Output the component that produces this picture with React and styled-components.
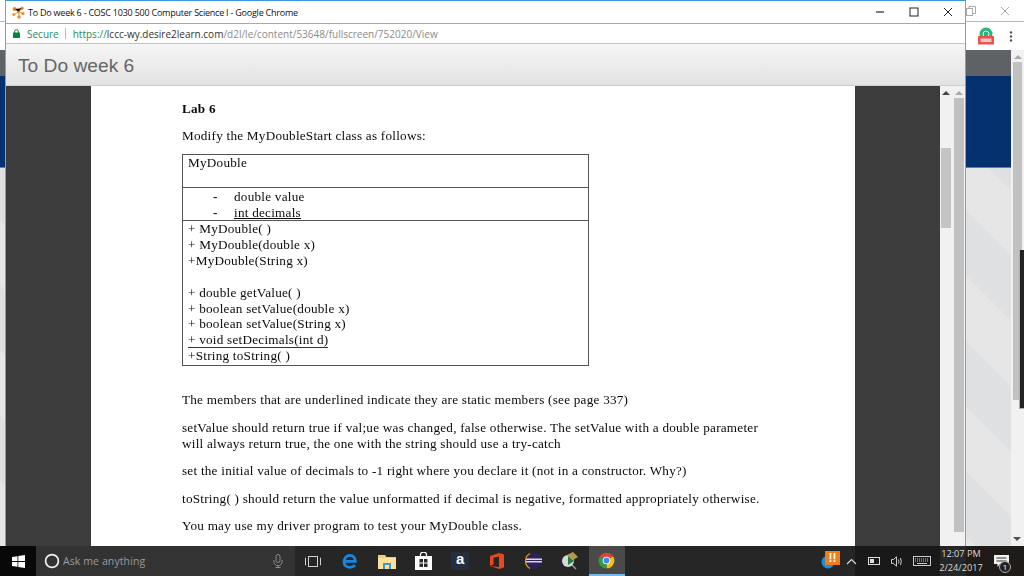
import React from "react";
import styled, { createGlobalStyle } from "styled-components";

const Global = createGlobalStyle`
  html, body { margin: 0; padding: 0; background: #222; overflow: hidden; }
  * { box-sizing: border-box; }
`;

const Desktop = styled.div`
  position: relative;
  width: 1024px;
  height: 576px;
  display: flex;
  flex-direction: column;
  overflow: hidden;
`;

/* ---------- browser window behind ---------- */
const BackBrowser = styled.div`
  height: 546px;
  display: flex;
  flex-direction: column;
`;
const BackTitle = styled.div`
  height: 22px;
  flex: none;
  background: #fff;
  border-bottom: 1px solid #b9b9b9;
  display: flex;
  justify-content: flex-end;
  align-items: center;
  gap: 24px;
  padding-right: 14px;
`;
const BackAddress = styled.div`
  height: 28px;
  flex: none;
  background: #fff;
  display: flex;
  justify-content: flex-end;
  align-items: center;
  padding-right: 11px;
  gap: 14px;
`;
const BackBody = styled.div`
  flex: 1;
  display: flex;
  min-height: 0;
`;
const BackColumn = styled.div`
  flex: 1;
  display: flex;
  flex-direction: column;
`;
const GrayBand = styled.div`
  height: 26px;
  background: #5e6166;
  flex: none;
`;
const NavyBand = styled.div`
  height: 92px;
  background: #05316f;
  border-bottom: 1px solid #5b7fb0;
  flex: none;
`;
const Pattern = styled.div`
  flex: 1;
  background: repeating-linear-gradient(
    45deg,
    #e6e6e6 0 46px,
    #dfe0e1 46px 92px
  );
`;
const BackScroll = styled.div`
  width: 13px;
  background: #f1f1f1;
  display: flex;
  flex-direction: column;
  align-items: center;
  position: relative;
  padding-top: 5px;
`;
const BackThumb = styled.div`
  width: 9px;
  height: 338px;
  background: #c1c1c1;
  margin-top: 3px;
`;
const Arrow = styled.div`
  width: 0;
  height: 0;
  border-left: 4px solid transparent;
  border-right: 4px solid transparent;
  border-bottom: 4px solid ${(p) => p.$color || "#a8a8a8"};
`;
const DownArrow = styled.div`
  position: absolute;
  bottom: 5px;
  left: 2px;
  width: 0;
  height: 0;
  border-left: 4px solid transparent;
  border-right: 4px solid transparent;
  border-top: 4px solid #505050;
`;
const DarkTab = styled.div`
  position: absolute;
  right: 0;
  top: 200px;
  width: 5px;
  height: 159px;
  background: #222;
  border-left: 1px solid #aaa;
  border-bottom: 1px solid #aaa;
`;

/* ---------- front window ---------- */
const Window = styled.div`
  position: absolute;
  left: 5px;
  top: 0;
  width: 961px;
  height: 546px;
  border-left: 1px solid #6ca6d9;
  border-right: 1px solid #6ca6d9;
  border-top: 1px solid #3b97e0;
  background: #fff;
  display: flex;
  flex-direction: column;
`;
const TitleBar = styled.div`
  height: 23px;
  flex: none;
  background: #fff;
  border-bottom: 1px solid #a9a9a9;
  display: flex;
  align-items: center;
  padding-left: 6px;
  font-family: "Open Sans", sans-serif;
  font-size: 9px;
  letter-spacing: -0.23px;
  color: #111;
`;
const TitleText = styled.span`
  margin-left: 3px;
  flex: 1;
  white-space: nowrap;
`;
const WinControls = styled.div`
  display: flex;
  align-items: center;
`;
const WinButton = styled.div`
  width: 34px;
  height: 22px;
  display: flex;
  align-items: center;
  justify-content: center;
`;
const AddressBar = styled.div`
  height: 20px;
  flex: none;
  border-bottom: 1px solid #c4c4c4;
  display: flex;
  align-items: center;
  padding-left: 7px;
  font-family: "Open Sans", sans-serif;
  font-size: 10px;
  white-space: nowrap;
`;
const Secure = styled.span`
  color: #1f8a5b;
  margin-left: 7px;
`;
const Divider = styled.span`
  width: 1px;
  height: 11px;
  background: #bbb;
  margin: 0 7px 0 6px;
`;
const Url = styled.span`
  color: ${(p) => p.$c};
`;
const Header = styled.div`
  height: 42px;
  flex: none;
  background: linear-gradient(#f6f6f6, #e2e2e2);
  border-bottom: 1px solid #cfcfcf;
  display: flex;
  align-items: center;
  padding: 2px 0 0 12px;
  font-family: "Liberation Sans", sans-serif;
  font-size: 19.2px;
  color: #666;
`;
const Content = styled.div`
  flex: 1;
  display: flex;
  min-height: 0;
  overflow: hidden;
`;
const DarkSide = styled.div`
  width: ${(p) => p.$w}px;
  flex: none;
  background: #3c3c3c;
`;
const DocPage = styled.div`
  width: 764px;
  flex: none;
  background: #fff;
  padding: 15px 0 0 91px;
  font-family: "Liberation Serif", serif;
  font-size: 13.2px;
  line-height: 16px;
  color: #0a0a0a;
  filter: blur(0.3px);
  letter-spacing: 0.235px;
`;
const Heading = styled.div`
  font-weight: 700;
`;
const Para = styled.p`
  margin: ${(p) => p.$top || 11.4}px 0 0;
  width: 585px;
`;
const Uml = styled.div`
  width: 407px;
  margin-top: 10px;
  border: 1px solid #555;
`;
const UmlSection = styled.div`
  height: ${(p) => p.$h}px;
  padding: ${(p) => p.$pt || 0}px 0 0 5px;
  border-bottom: ${(p) => (p.$last ? "none" : "1px solid #555")};
`;
const Member = styled.div`
  display: flex;
  padding-left: 25px;
  height: 16px;
`;
const Dash = styled.span`
  width: 21px;
  font-weight: 700;
`;
const Under = styled.span`
  text-decoration: underline;
`;
const UmlLine = styled.div`
  height: 15.85px;
  white-space: pre;
`;
const UnderLine = styled.span`
  border-bottom: 1px solid #333;
  display: inline-block;
  height: 16px;
`;
const Side = styled.div`
  width: 25px;
  flex: none;
  background: #f1f1f1;
  display: flex;
`;
const InnerTrack = styled.div`
  width: 12px;
  display: flex;
  flex-direction: column;
  align-items: center;
  padding-top: 5px;
`;
const InnerThumb = styled.div`
  width: 10px;
  height: 80px;
  background: #c4c4c4;
  margin-top: 53px;
`;
const OuterTrack = styled.div`
  width: 13px;
  display: flex;
  flex-direction: column;
  align-items: center;
  padding-top: 5px;
`;
const OuterThumb = styled.div`
  width: 10px;
  height: 434px;
  background: #c1c1c1;
  margin-top: 3px;
`;

/* ---------- taskbar ---------- */
const Taskbar = styled.div`
  height: 30px;
  flex: none;
  display: flex;
  align-items: stretch;
  background: linear-gradient(
    90deg,
    #262626 0 855px,
    #191919 855px 940px,
    #272727 940px 966px,
    #1e1b18 966px
  );
  color: #ddd;
`;
const Start = styled.div`
  width: 36px;
  background: #080808;
  display: flex;
  align-items: center;
  justify-content: center;
`;
const Search = styled.div`
  width: 259px;
  background: #333;
  display: flex;
  align-items: center;
  padding: 0 12px 0 8px;
  font-family: "Open Sans", sans-serif;
  font-size: 10.5px;
  color: #9a9a9a;
`;
const SearchText = styled.span`
  margin-left: 3px;
  flex: 1;
  letter-spacing: 0.1px;
`;
const Cell = styled.div`
  width: 36.7px;
  flex: none;
  display: flex;
  align-items: center;
  justify-content: center;
  position: relative;
  background: ${(p) => (p.$active ? "#4a4a4a" : "transparent")};
  border-bottom: ${(p) => (p.$active ? "2px solid #76b9ed" : "none")};
`;
const AmazonTile = styled.div`
  width: 18px;
  height: 18px;
  background: #232f3e;
  border-radius: 1px;
  color: #fff;
  font-family: "Liberation Sans", sans-serif;
  font-weight: 700;
  font-size: 15px;
  line-height: 14px;
  text-align: center;
`;
const Tray = styled.div`
  margin-left: auto;
  display: flex;
  align-items: center;
  height: 100%;
  padding-right: 8px;
`;
const TrayIcon = styled.div`
  width: ${(p) => p.$w}px;
  height: 100%;
  flex: none;
  display: flex;
  align-items: center;
  justify-content: center;
  position: relative;
`;
const Badge = styled.div`
  position: absolute;
  right: 0;
  top: 5px;
  width: 15px;
  height: 14px;
  background: #f07d1a;
  color: #fff;
  font-family: "Liberation Sans", sans-serif;
  font-weight: 700;
  font-size: 12px;
  line-height: 14px;
  text-align: center;
`;
const Clock = styled.div`
  width: 50px;
  flex: none;
  font-family: "Open Sans", sans-serif;
  font-size: 9.2px;
  line-height: 14px;
  text-align: center;
  color: #d8d8d8;
  white-space: nowrap;
`;
const Count = styled.span`
  position: absolute;
  right: 5px;
  bottom: 3px;
  width: 12px;
  height: 12px;
  border-radius: 50%;
  border: 1px solid #aaa;
  background: #222;
  color: #fff;
  font-family: "Open Sans", sans-serif;
  font-size: 8px;
  line-height: 10px;
  text-align: center;
`;

/* ---------- drawings ---------- */
const Favicon = () => (
  <svg width="13" height="13" viewBox="0 0 13 13">
    <g fill="#e8892b">
      <circle cx="2.5" cy="3" r="1.9" />
      <circle cx="10" cy="2.2" r="1.7" />
      <circle cx="1.8" cy="8.6" r="1.4" />
      <circle cx="11" cy="7.4" r="1.5" />
      <circle cx="7" cy="11" r="1.7" />
      <circle cx="6.5" cy="6" r="1.4" />
    </g>
    <path d="M2.5 3L6.5 6L10 2.2M6.5 6L11 7.4M6.5 6L7 11M6.5 6L1.8 8.6" stroke="#e8892b" strokeWidth="0.9" />
  </svg>
);
const Lock = () => (
  <svg width="7" height="9" viewBox="0 0 7 9">
    <path d="M1.6 4V2.6a1.9 1.9 0 0 1 3.8 0V4" fill="none" stroke="#0b8043" strokeWidth="1" />
    <rect x="0" y="3.6" width="7" height="5.4" rx="0.6" fill="#0b8043" />
  </svg>
);
const MinIcon = () => (
  <svg width="10" height="10" viewBox="0 0 10 10"><path d="M1 5H9" stroke="#111" strokeWidth="1.1" /></svg>
);
const MaxIcon = () => (
  <svg width="10" height="10" viewBox="0 0 10 10"><rect x="1" y="1" width="8" height="8" fill="none" stroke="#222" /></svg>
);
const CloseIcon = ({ c = "#222" }) => (
  <svg width="10" height="10" viewBox="0 0 10 10"><path d="M1 1L9 9M9 1L1 9" stroke={c} strokeWidth="1" /></svg>
);
const RestoreIcon = () => (
  <svg width="10" height="10" viewBox="0 0 10 10">
    <rect x="0.5" y="2.5" width="6" height="7" fill="none" stroke="#aaa" />
    <path d="M3 2.5V.5H9.5V7.5H6.5" fill="none" stroke="#aaa" />
  </svg>
);
const NewBadge = () => (
  <svg width="18" height="18" viewBox="0 0 18 18">
    <circle cx="9" cy="7" r="6.5" fill="#28b37b" />
    <circle cx="9" cy="7" r="3" fill="none" stroke="#e9f7f1" strokeWidth="1" />
    <rect x="1" y="9" width="16" height="8.5" rx="0.5" fill="#e8534a" />
    <rect x="3.5" y="11.5" width="11" height="3.6" fill="#f7c5c1" />
  </svg>
);
const MenuDots = () => (
  <svg width="4" height="11" viewBox="0 0 4 11">
    <circle cx="2" cy="1.5" r="1.2" fill="#555" />
    <circle cx="2" cy="5.5" r="1.2" fill="#555" />
    <circle cx="2" cy="9.5" r="1.2" fill="#555" />
  </svg>
);
const WinLogo = () => (
  <svg width="13" height="13" viewBox="0 0 13 13" fill="#fff">
    <path d="M0 2L5.5 1.2V6H0zM6.3 1.1L13 0V6H6.3zM0 6.9H5.5V11.8L0 11zM6.3 6.9H13V13L6.3 12z" />
  </svg>
);
const Ring = () => (
  <svg width="16" height="16" viewBox="0 0 16 16">
    <circle cx="8" cy="8" r="6.4" fill="none" stroke="#f2f2f2" strokeWidth="1.7" />
  </svg>
);
const Mic = () => (
  <svg width="10" height="14" viewBox="0 0 10 14" fill="none" stroke="#8e8e8e">
    <rect x="3" y="0.5" width="4" height="8" rx="2" />
    <path d="M.8 6V7.5a4.2 4.2 0 0 0 8.4 0V6M5 12V13.5M2.5 13.5H7.5" />
  </svg>
);
const TaskView = () => (
  <svg width="16" height="11" viewBox="0 0 16 11" fill="none" stroke="#d0d0d0">
    <rect x="3.5" y="0.5" width="9" height="10" />
    <path d="M1 2H.5V9H1M15 2H15.5V9H15" />
  </svg>
);
const Edge = () => (
  <svg width="16" height="16" viewBox="0 0 24 24" fill="none">
    <path d="M5 12.5H20C20 7 16.5 3.5 12 3.5C6.5 3.5 3 8 3 13.5C3 18.5 7 21.5 12 21.5C15 21.5 17.5 20.5 19.5 18.5" stroke="#1787e0" strokeWidth="4.2" />
  </svg>
);
const Folder = () => (
  <svg width="18" height="15" viewBox="0 0 18 15">
    <path d="M0 1H7L8.5 3H18V15H0z" fill="#f3d06f" />
    <rect x="0" y="4" width="18" height="11" fill="#fbe29b" />
    <path d="M5 9H13V15H11V11H7V15H5z" fill="#3a9ad9" />
  </svg>
);
const Store = () => (
  <svg width="17" height="18" viewBox="0 0 17 18">
    <path d="M5.5 4V2.5a3 2.3 0 0 1 6 0V4" fill="none" stroke="#fff" strokeWidth="1.2" />
    <path d="M0 4H17V18H0z" fill="#fff" />
    <g fill="#2a2a2a">
      <rect x="4.5" y="7" width="3.5" height="3.5" />
      <rect x="9" y="7" width="3.5" height="3.5" />
      <rect x="4.5" y="11.5" width="3.5" height="3.5" />
      <rect x="9" y="11.5" width="3.5" height="3.5" />
    </g>
  </svg>
);
const Office = () => (
  <svg width="14" height="16" viewBox="0 0 14 16">
    <path d="M0 3L9 0L14 1.5V14.5L9 16L0 13L9 14V3.5L3.5 4.8V11.5L0 13z" fill="#e8481c" />
  </svg>
);
const Eclipse = () => (
  <svg width="18" height="18" viewBox="0 0 18 18">
    <circle cx="10" cy="9" r="8" fill="#2c2255" />
    <rect x="2" y="6.5" width="16" height="1.5" fill="#d8d4ea" />
    <rect x="2" y="9" width="16" height="1.5" fill="#d8d4ea" />
    <path d="M6 1.5A8.5 8.5 0 0 0 6 16.5" fill="none" stroke="#f0921e" strokeWidth="1.2" />
  </svg>
);
const Wheel = () => (
  <svg width="18" height="18" viewBox="0 0 18 18">
    <circle cx="7" cy="9" r="6" fill="#d8d8d8" />
    <path d="M7 4L13 9L7 13z" fill="#1e7d3c" />
    <path d="M6 3L12 0L17 5L12 8z" fill="#b39a4a" />
    <path d="M11 13L15 17" stroke="#999" strokeWidth="1.5" />
  </svg>
);
const Chrome = () => (
  <svg width="17" height="17" viewBox="0 0 24 24">
    <path d="M12 12L2.47 6.5A11 11 0 0 1 21.53 6.5Z" fill="#db4437" />
    <path d="M12 12L21.53 6.5A11 11 0 0 1 12 23Z" fill="#f4c20d" />
    <path d="M12 12L12 23A11 11 0 0 1 2.47 6.5Z" fill="#2f9e44" />
    <circle cx="12" cy="12" r="5.4" fill="#fff" />
    <circle cx="12" cy="12" r="4.2" fill="#4285f4" />
  </svg>
);
const SyncDot = () => (
  <svg width="14" height="15" viewBox="0 0 14 15">
    <circle cx="7" cy="8" r="6.5" fill="#1d8fdc" />
    <circle cx="7" cy="8" r="3" fill="#e4f2fb" />
  </svg>
);
const Caret = () => (
  <svg width="11" height="7" viewBox="0 0 11 7"><path d="M1 6L5.5 1.5L10 6" fill="none" stroke="#ddd" strokeWidth="1.1" /></svg>
);
const Battery = () => (
  <svg width="12" height="8" viewBox="0 0 12 8">
    <rect x="0.5" y="0.5" width="11" height="7" fill="none" stroke="#ddd" />
    <rect x="2" y="2" width="4" height="4" fill="#ddd" />
  </svg>
);
const Volume = () => (
  <svg width="12" height="11" viewBox="0 0 12 11" fill="none" stroke="#ccc">
    <path d="M.5 3.5H2.5L5.5 .8V10.2L2.5 7.5H.5z" />
    <path d="M7.5 3.5Q8.5 5.5 7.5 7.5M9.5 2Q11.2 5.5 9.5 9" />
  </svg>
);
const Keyboard = () => (
  <svg width="18" height="10" viewBox="0 0 18 10" fill="none" stroke="#ccc">
    <rect x="0.5" y="0.5" width="17" height="9" />
    <path d="M2 3H16M2 5H16" strokeDasharray="1 1" />
    <path d="M4 7.5H14" />
  </svg>
);
const Notify = () => (
  <svg width="15" height="13" viewBox="0 0 15 13">
    <path d="M0 0H15V9H6L3.5 12V9H0z" fill="#f0f0f0" />
    <path d="M2.5 3H12.5M2.5 6H12.5" stroke="#333" />
  </svg>
);

const TITLE = "To Do week 6 - COSC 1030 500 Computer Science I - Google Chrome";

export default function App() {
  return (
    <Desktop>
      <Global />
      <BackBrowser>
        <BackTitle>
          <RestoreIcon />
          <CloseIcon c="#aaa" />
        </BackTitle>
        <BackAddress>
          <NewBadge />
          <MenuDots />
        </BackAddress>
        <BackBody>
          <BackColumn>
            <GrayBand />
            <NavyBand />
            <Pattern />
          </BackColumn>
          <BackScroll>
            <Arrow />
            <BackThumb />
            <DarkTab />
            <DownArrow />
          </BackScroll>
        </BackBody>
      </BackBrowser>

      <Window>
        <TitleBar>
          <Favicon />
          <TitleText>{TITLE}</TitleText>
          <WinControls>
            <WinButton><MinIcon /></WinButton>
            <WinButton><MaxIcon /></WinButton>
            <WinButton><CloseIcon /></WinButton>
          </WinControls>
        </TitleBar>
        <AddressBar>
          <Lock />
          <Secure>Secure</Secure>
          <Divider />
          <Url $c="#1f8a5b">https://</Url>
          <Url $c="#333">lccc-wy.desire2learn.com</Url>
          <Url $c="#8a8a8a">/d2l/le/content/53648/fullscreen/752020/View</Url>
        </AddressBar>
        <Header>To Do week 6</Header>
        <Content>
          <DarkSide $w={85} />
          <DocPage>
            <Heading>Lab 6</Heading>
            <Para>Modify the MyDoubleStart class as follows:</Para>
            <Uml>
              <UmlSection $h={33}>MyDouble</UmlSection>
              <UmlSection $h={33} $pt={1}>
                <Member><Dash>-</Dash><span>double value</span></Member>
                <Member><Dash>-</Dash><Under>int decimals</Under></Member>
              </UmlSection>
              <UmlSection $h={144} $last>
                <UmlLine>+ MyDouble( )</UmlLine>
                <UmlLine>+ MyDouble(double x)</UmlLine>
                <UmlLine>+MyDouble(String x)</UmlLine>
                <UmlLine> </UmlLine>
                <UmlLine>+ double getValue( )</UmlLine>
                <UmlLine>+ boolean setValue(double x)</UmlLine>
                <UmlLine>+ boolean setValue(String x)</UmlLine>
                <UmlLine><UnderLine>+ void setDecimals(int d)</UnderLine></UmlLine>
                <UmlLine>+String toString( )</UmlLine>
              </UmlSection>
            </Uml>
            <Para $top={26}>The members that are underlined indicate they are static members (see page 337)</Para>
            <Para>setValue should return true if val;ue was changed, false otherwise. The setValue with a double parameter will always return true, the one with the string should use a try-catch</Para>
            <Para>set the initial value of decimals to -1 right where you declare it (not in a constructor. Why?)</Para>
            <Para>toString( ) should return the value unformatted if decimal is negative, formatted appropriately otherwise.</Para>
            <Para>You may use my driver program to test your MyDouble class.</Para>
          </DocPage>
          <DarkSide $w={85} />
          <Side>
            <InnerTrack>
              <Arrow $color="#444" />
              <InnerThumb />
            </InnerTrack>
            <OuterTrack>
              <Arrow />
              <OuterThumb />
            </OuterTrack>
          </Side>
        </Content>
      </Window>

      <Taskbar>
        <Start><WinLogo /></Start>
        <Search>
          <Ring />
          <SearchText>Ask me anything</SearchText>
          <Mic />
        </Search>
        <Cell><TaskView /></Cell>
        <Cell><Edge /></Cell>
        <Cell><Folder /></Cell>
        <Cell><Store /></Cell>
        <Cell><AmazonTile>a</AmazonTile></Cell>
        <Cell><Office /></Cell>
        <Cell><Eclipse /></Cell>
        <Cell><Wheel /></Cell>
        <Cell $active><Chrome /></Cell>
        <Tray>
          <TrayIcon $w={24}><SyncDot /><Badge>!!</Badge></TrayIcon>
          <TrayIcon $w={22}><Caret /></TrayIcon>
          <TrayIcon $w={24}><Battery /></TrayIcon>
          <TrayIcon $w={22}><Volume /></TrayIcon>
          <TrayIcon $w={28}><Keyboard /></TrayIcon>
          <Clock>12:07 PM<br />2/24/2017</Clock>
          <TrayIcon $w={30}><Notify /><Count>1</Count></TrayIcon>
        </Tray>
      </Taskbar>
    </Desktop>
  );
}
